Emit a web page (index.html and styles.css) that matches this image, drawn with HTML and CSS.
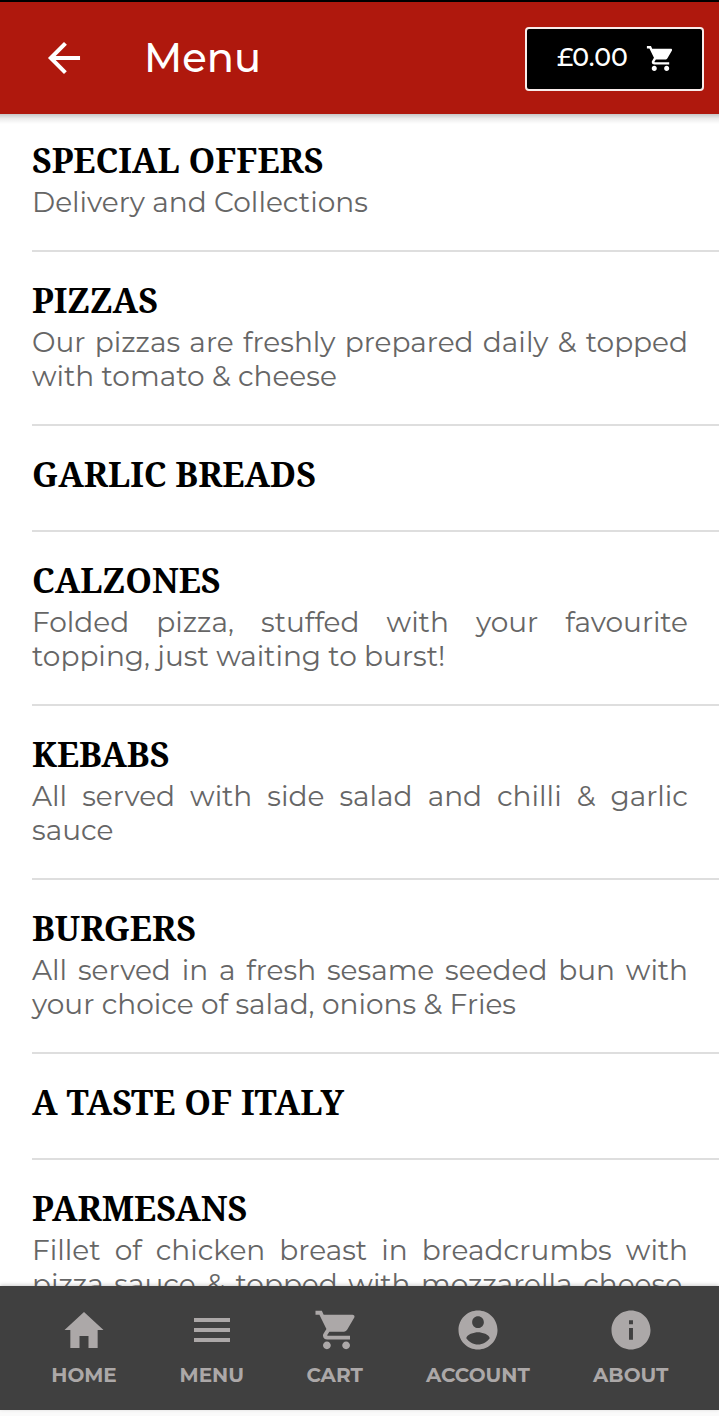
FILE: index.html
```
<!DOCTYPE html>
<html lang="en">
<head>
<meta charset="utf-8">
<title>Menu</title>
<link rel="stylesheet" href="styles.css">
</head>
<body>
<div class="app">
  <header class="header">
    <svg class="back" viewBox="0 0 512 512"><path d="M427 234.625H167.296l119.702-119.702L256 85 85 256l171 171 29.922-29.924-118.626-119.701H427v-42.75z"/></svg>
    <h1 class="heading">Menu</h1>
    <button class="basket">
      <span class="price">£0.00</span>
      <svg class="basket-icon" viewBox="0 0 512 512"><use href="#cart"/></svg>
    </button>
  </header>
  <main class="list">
    <section class="item"><h2 class="title">SPECIAL OFFERS</h2><p class="desc">Delivery and Collections</p></section>
    <section class="item"><h2 class="title">PIZZAS</h2><p class="desc">Our pizzas are freshly prepared daily &amp; topped with tomato &amp; cheese</p></section>
    <section class="item"><h2 class="title">GARLIC BREADS</h2></section>
    <section class="item"><h2 class="title">CALZONES</h2><p class="desc">Folded pizza, stuffed with your favourite topping, just waiting to burst!</p></section>
    <section class="item"><h2 class="title">KEBABS</h2><p class="desc">All served with side salad and chilli &amp; garlic sauce</p></section>
    <section class="item"><h2 class="title">BURGERS</h2><p class="desc">All served in a fresh sesame seeded bun with your choice of salad, onions &amp; Fries</p></section>
    <section class="item"><h2 class="title">A TASTE OF ITALY</h2></section>
    <section class="item"><h2 class="title">PARMESANS</h2><p class="desc filled">Fillet of chicken breast in breadcrumbs with pizza sauce &amp; topped with mozzarella cheese.</p></section>
  </main>
  <nav class="tabs">
    <a class="tab"><svg class="tab-icon" viewBox="0 0 512 512"><path d="M208 448V320h96v128h97.6V256H464L256 64 48 256h62.4v192z"/></svg><span class="label">HOME</span></a>
    <a class="tab"><svg class="tab-icon" viewBox="0 0 512 512"><path d="M64 384h384v-42.666H64V384zm0-106.666h384v-42.667H64v42.667zM64 128v42.665h384V128H64z"/></svg><span class="label">MENU</span></a>
    <a class="tab"><svg class="tab-icon" viewBox="0 0 512 512"><path id="cart" d="M169.6 377.6c-22.882 0-41.6 18.718-41.6 41.601 0 22.882 18.718 41.6 41.6 41.6s41.601-18.718 41.601-41.6c-.001-22.884-18.72-41.601-41.601-41.601zM48 51.2v41.6h41.6l74.883 151.682-31.308 50.954c-3.118 5.2-5.2 12.482-5.2 19.765 0 27.85 19.025 41.6 44.825 41.6H416v-40H177.893c-3.118 0-5.2-2.082-5.2-5.2 0-1.036 2.207-5.2 2.207-5.2l20.782-32.8h154.954c15.601 0 29.128-8.317 36.4-21.836l74.882-128.8c1.237-2.461 2.082-6.246 2.082-10.4 0-11.446-9.364-19.4-20.8-19.4H135.364L115.6 51.2H48zm326.399 326.4c-22.882 0-41.6 18.718-41.6 41.601 0 22.882 18.718 41.6 41.6 41.6S416 442.082 416 419.2c0-22.883-18.719-41.6-41.601-41.6z"/></svg><span class="label">CART</span></a>
    <a class="tab"><svg class="tab-icon" viewBox="0 0 512 512"><path d="M256 48C140.8 48 48 140.8 48 256s92.8 208 208 208 208-92.8 208-208S371.2 48 256 48zm0 62.4c34.3 0 62.4 28.1 62.4 62.4s-28.1 62.4-62.4 62.4-62.4-28.1-62.4-62.4 28.1-62.4 62.4-62.4zm0 300.4c-52 0-97.8-27-124.8-66.6 1-41.6 83.2-64.4 124.8-64.4s123.8 22.8 124.8 64.4c-27 39.5-72.8 66.6-124.8 66.6z"/></svg><span class="label">ACCOUNT</span></a>
    <a class="tab"><svg class="tab-icon" viewBox="0 0 512 512"><path d="M256 48C141.2 48 48 141.2 48 256s93.2 208 208 208 208-93.2 208-208S370.8 48 256 48zm21 312h-42V235h42v125zm0-166h-42v-42h42v42z"/></svg><span class="label">ABOUT</span></a>
  </nav>
</div>
</body>
</html>
```
FILE: styles.css
```
* { box-sizing: border-box; }
body { margin: 0; background: #fafafa; font-family: Montserrat, Inter, sans-serif; }
.app { height: 1416px; display: flex; flex-direction: column; overflow: hidden; padding-bottom: 6px; }
.header {
  flex: none; height: 114px; border-top: 2px solid #000; background: #af180d; color: #fff;
  display: flex; align-items: center; padding: 0 15px 0 40px; position: relative; z-index: 1;
}
.header::after {
  content: ""; position: absolute; left: 0; right: 0; top: 100%; height: 10px;
  background: linear-gradient(rgba(0, 0, 0, .22), rgba(0, 0, 0, .08) 45%, rgba(0, 0, 0, 0));
}
.back { width: 48px; height: 48px; fill: #fff; }
.heading { margin: 0 0 0 56px; font-size: 40px; line-height: 48px; font-weight: 500; }
.basket {
  margin: 2px 0 0 auto; width: 179px; height: 64px; padding: 0 27px 0 30px;
  display: flex; align-items: center; justify-content: space-between;
  background: #000; color: #fff; border: 2px solid #f8eceb; border-radius: 4px; font-family: inherit;
}
.price { font-size: 25.2px; line-height: 30px; font-weight: 500; padding-bottom: 4px; }
.basket-icon { width: 31px; height: 31px; margin-bottom: 1px; fill: #fff; }
.list { flex: 1; min-height: 0; overflow: hidden; background: #fff; }
.item { margin-left: 32px; padding: 31px 31px 31px 0; border-bottom: 2px solid #dedede; }
.item:first-child { padding-top: 29px; }
.title {
  margin: 0 0 8px; font: 700 34px/34px "Noto Serif", "Liberation Serif", serif;
  color: #000; letter-spacing: -.02px; white-space: nowrap;
}
.desc { margin: 0; font-size: 28px; line-height: 34px; font-weight: 400; color: #666; text-align: justify; }
.filled { text-align-last: justify; }
.tabs {
  flex: none; height: 124px; background: #404040; padding: 20px 50.8px 0 52px;
  display: grid; grid-template-columns: 64px 64px 56px 104px 75px; column-gap: 63.3px; justify-content: start;
  position: relative; box-shadow: 0 -1px 4px rgba(0, 0, 0, .2);
}
.tab { display: flex; flex-direction: column; align-items: center; color: #aca8a8; }
.tab:nth-child(2) { padding-left: 1px; }
.tab-icon { width: 48px; height: 48px; fill: #aca8a8; }
.label { margin-top: 9px; font-size: 20px; line-height: 24px; font-weight: 700; }
```
